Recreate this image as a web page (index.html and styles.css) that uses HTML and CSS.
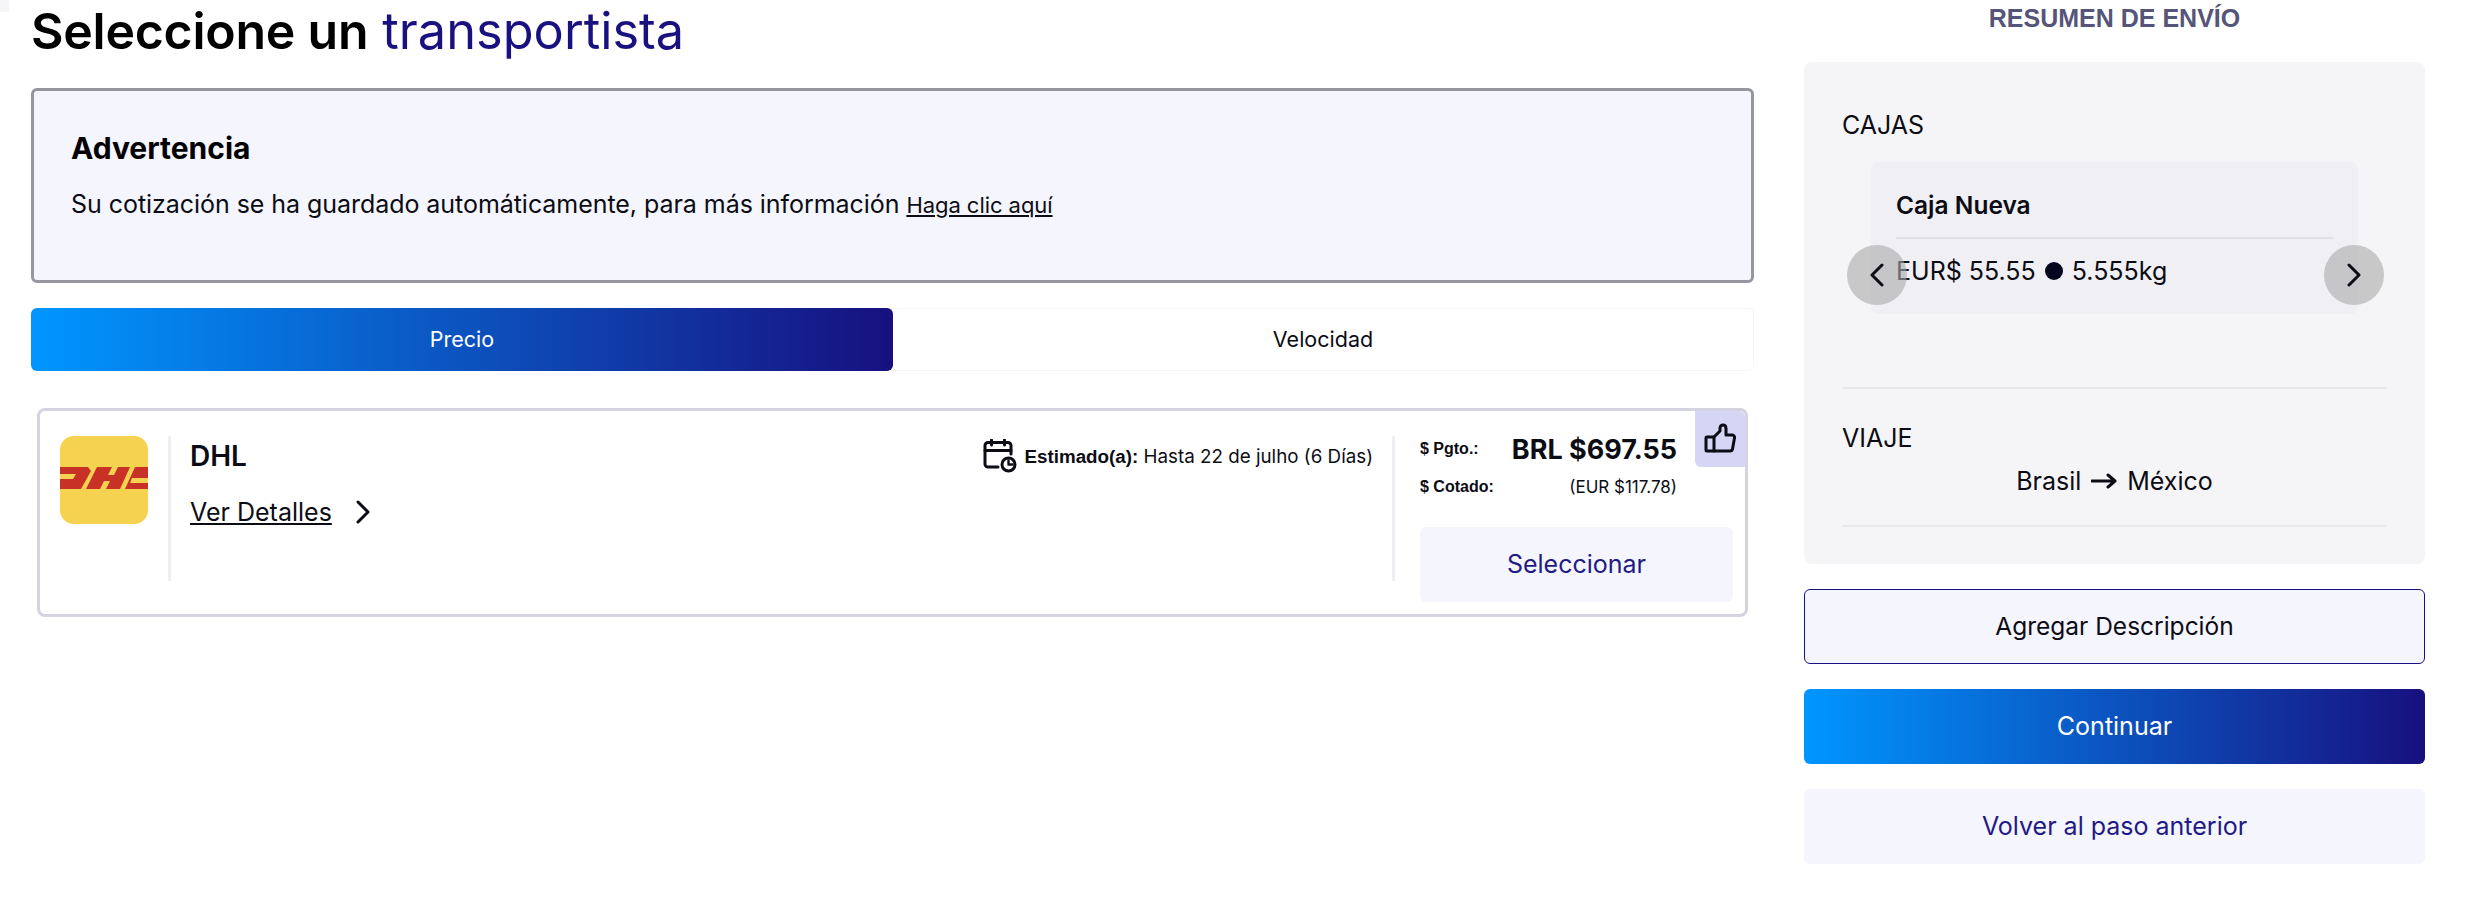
FILE: index.html
```html
<!DOCTYPE html>
<html lang="es">
<head>
    <meta charset="UTF-8">
    <meta name="viewport" content="width=device-width, initial-scale=1.0">
    <title>Seleccione un transportista</title>
    <link rel="stylesheet" href="styles.css">
</head>
<body>
    <div class="corner"></div>
    <div class="page">
        <main class="main">
            <h1 class="title"><b>Seleccione un</b> <span>transportista</span></h1>

            <section class="warning">
                <h2>Advertencia</h2>
                <p>Su cotización se ha guardado automáticamente, para más información <a href="#">Haga clic aquí</a></p>
            </section>

            <div class="tabs">
                <button class="tab active">Precio</button>
                <button class="tab">Velocidad</button>
            </div>

            <article class="card">
                <svg class="logo" viewBox="0 0 88 88" aria-label="DHL">
                    <rect width="88" height="88" fill="#f5d24f"/>
                    <rect y="31" width="88" height="22" fill="#c83226"/>
                    <!-- slits cut out of the red band -->
                    <path fill="#f5d24f" d="M0 38h16l-3 5H0zM28 31h9L26 53h-5l10-18zM52 31h6l-4 8h-6zM44 45h6l-4 8h-6zM70 31h5L65 53h-5zM72 42h16v5H70z"/>
                </svg>

                <div class="carrier">
                    <div class="carrier-head">
                        <h3>DHL</h3>
                        <div class="estimate">
                            <svg class="calendar" viewBox="0 0 34 34" fill="none" stroke="#0c0c14" stroke-width="3" stroke-linecap="round" stroke-linejoin="round">
                                <path d="M15 28H5a3 3 0 0 1-3-3V6.500a3 3 0 0 1 3-3h20a3 3 0 0 1 3 3V15"/>
                                <path d="M2 11.500h26M8.500 1v5M21.500 1v5"/>
                                <circle cx="25.500" cy="25.500" r="6.500"/>
                                <path d="M25.500 21.500v4h4" stroke-width="2.400"/>
                            </svg>
                            <span><b>Estimado(a):</b> Hasta 22 de julho (6 Días)</span>
                        </div>
                    </div>
                    <a class="details" href="#"><span>Ver Detalles</span>
                        <svg viewBox="0 0 14 24" fill="none" stroke="#0c0c14" stroke-width="3" stroke-linecap="round" stroke-linejoin="round"><path d="M2 2l10 10L2 22"/></svg>
                    </a>
                </div>

                <div class="quote">
                    <div class="price-row">
                        <span class="label">$ Pgto.:</span>
                        <strong>BRL $697.55</strong>
                    </div>
                    <div class="price-row quoted">
                        <span class="label">$ Cotado:</span>
                        <span>(EUR $117.78)</span>
                    </div>
                    <button class="btn btn-soft select">Seleccionar</button>
                </div>

                <div class="thumb">
                    <svg viewBox="0 0 32 32" fill="none" stroke="#0c0c14" stroke-width="3" stroke-linejoin="round" stroke-linecap="round">
                        <path d="M10 14l6-6V5a3 3 0 0 1 3-3c2 0 3 1.500 3 3.500V12h6a2.500 2.500 0 0 1 2.500 3l-2 11a2.500 2.500 0 0 1-2.500 2H10z"/>
                        <path d="M10 14H3a1 1 0 0 0-1 1v12a1 1 0 0 0 1 1h7"/>
                    </svg>
                </div>
            </article>
        </main>

        <aside class="sidebar">
            <h2 class="sidebar-title">RESUMEN DE ENVÍO</h2>
            <div class="summary">
                <h4>CAJAS</h4>
                <div class="box">
                    <div class="box-name">Caja Nueva</div>
                    <div class="box-info"><span>EUR$ 55.55</span><i class="dot"></i><span>5.555kg</span></div>
                    <button class="nav prev" aria-label="Anterior">
                        <svg viewBox="0 0 14 24" fill="none" stroke="#0c0c14" stroke-width="3" stroke-linecap="round" stroke-linejoin="round"><path d="M12 2L2 12l10 10"/></svg>
                    </button>
                    <button class="nav next" aria-label="Siguiente">
                        <svg viewBox="0 0 14 24" fill="none" stroke="#0c0c14" stroke-width="3" stroke-linecap="round" stroke-linejoin="round"><path d="M2 2l10 10L2 22"/></svg>
                    </button>
                </div>
                <hr class="rule">
                <h4>VIAJE</h4>
                <div class="route">Brasil
                    <svg viewBox="0 0 26 16" fill="none" stroke="#0c0c14" stroke-width="3" stroke-linecap="round" stroke-linejoin="round"><path d="M1 8h23M17 2l7 6-7 6"/></svg>
                    México</div>
                <hr class="rule">
            </div>
            <button class="btn btn-outline">Agregar Descripción</button>
            <button class="btn btn-primary">Continuar</button>
            <button class="btn btn-soft">Volver al paso anterior</button>
        </aside>
    </div>
</body>
</html>
```

FILE: styles.css
```css
* {
    box-sizing: border-box;
}
body {
    margin: 0;
    background: #fff;
    color: #0c0c14;
    font-family: Inter, Arial, sans-serif;
}
button {
    font-family: inherit;
    cursor: pointer;
}
a {
    color: inherit;
}
.corner {
    position: absolute;
    top: 0;
    left: 0;
    width: 9px;
    height: 12px;
    background: #f6f6f8;
}
.page {
    display: flex;
    align-items: flex-start;
    padding-left: 31px;
}

/* left column */
.main {
    width: 1723px;
}
.title {
    margin: 0 0 26px;
    height: 62px;
    font-size: 50px;
    line-height: 62px;
    font-weight: 400;
    color: #000;
}
.title b {
    font-weight: 600;
    letter-spacing: -0.25px;
}
.title span {
    font-size: 50.500px;
    color: #1a1180;
}
.warning {
    height: 195px;
    padding: 39px 37px 0;
    background: #f5f5fd;
    border: 3px solid #96969e;
    border-radius: 6px;
}
.warning h2 {
    margin: 0 0 20px;
    font-size: 30px;
    line-height: 36px;
    font-weight: 700;
    color: #000;
}
.warning p {
    margin: 0;
    font-size: 25px;
    line-height: 36px;
    letter-spacing: -0.05px;
}
.warning a {
    font-size: 22px;
}
.tabs {
    display: flex;
    margin-top: 25px;
    height: 63px;
}
.tab {
    flex: 1;
    padding: 0 0 2px;
    border: 1px solid #f6f6f8;
    border-radius: 0 6px 6px 0;
    border-left: none;
    background: #fff;
    font-size: 21.500px;
    color: #0c0c14;
}
.tab.active {
    flex: 0 0 862px;
    border: none;
    border-radius: 6px;
    background: linear-gradient(90deg, #0096ff, #17107f);
    color: #fff;
}

.card {
    position: relative;
    display: flex;
    align-items: flex-start;
    height: 209px;
    margin: 37px 6px 0;
    padding: 25px 12px 12px 20px;
    border: 3px solid #d4d4e0;
    border-radius: 8px;
}
.logo {
    flex: none;
    width: 88px;
    height: 88px;
    border-radius: 14px;
}
.carrier {
    flex: 1;
    height: 145px;
    margin-left: 20px;
    padding: 0 19px 0 19px;
    border-left: 3px solid #eeeef3;
    border-right: 3px solid #eeeef3;
}
.carrier-head {
    display: flex;
    justify-content: space-between;
    align-items: flex-start;
}
.carrier-head h3 {
    margin: 0;
    font-size: 28px;
    line-height: 40px;
    font-weight: 600;
}
.estimate {
    display: flex;
    align-items: center;
    gap: 8px;
    height: 40px;
    font-size: 18.800px;
}
.estimate b {
    font-family: "Liberation Sans", Arial, sans-serif;
    font-weight: 700;
}
.calendar {
    width: 34px;
    height: 34px;
}
.details {
    display: inline-flex;
    align-items: center;
    gap: 24px;
    margin-top: 21px;
    font-size: 25px;
    text-decoration: none;
}
.details span {
    text-decoration: underline;
}
.details svg {
    width: 14px;
    height: 24px;
}
.quote {
    flex: none;
    width: 313px;
    margin: -6px 0 0 25px;
}
.price-row {
    display: flex;
    justify-content: space-between;
    align-items: center;
    height: 38px;
    padding-right: 56px;
}
.price-row strong {
    font-size: 27px;
    font-weight: 700;
}
.price-row.quoted {
    font-size: 17px;
}
.label {
    font-family: "Liberation Sans", Arial, sans-serif;
    font-size: 16px;
    font-weight: 700;
}
.thumb {
    position: absolute;
    top: 0;
    right: 0;
    display: flex;
    align-items: center;
    justify-content: center;
    width: 50px;
    height: 56px;
    background: #d5d5f6;
    border-radius: 0 6px 0 6px;
}
.thumb svg {
    width: 32px;
    height: 32px;
}

/* right column */
.sidebar {
    width: 621px;
    margin-left: 50px;
}
.sidebar-title {
    margin: 0 0 26px;
    font-family: "Liberation Sans", Arial, sans-serif;
    font-size: 25px;
    line-height: 36px;
    font-weight: 700;
    text-align: center;
    color: #55557a;
}
.summary {
    height: 502px;
    padding: 48px 38px 0;
    background: #f5f5f8;
    border-radius: 8px;
}
.summary h4 {
    margin: 0;
    font-size: 25px;
    line-height: 30px;
    font-weight: 400;
}
.box {
    position: relative;
    width: 487px;
    height: 152px;
    margin: 22px 0 73px 29px;
    padding: 24px 25px 0;
    background: #efeff4;
    border-radius: 8px;
}
.box-name {
    height: 53px;
    font-size: 24.500px;
    line-height: 38px;
    font-weight: 600;
    border-bottom: 2px solid #e0e0e8;
}
.box-info {
    display: flex;
    align-items: center;
    gap: 9px;
    margin-top: 14px;
    font-size: 25px;
    line-height: 36px;
}
.dot {
    width: 18px;
    height: 18px;
    border-radius: 50%;
    background: #05051f;
}
.nav {
    position: absolute;
    top: 83px;
    display: flex;
    align-items: center;
    justify-content: center;
    width: 60px;
    height: 60px;
    padding: 0;
    border: none;
    border-radius: 50%;
    background: rgba(170, 170, 170, 0.6);
}
.nav svg {
    width: 14px;
    height: 24px;
}
.nav.prev {
    left: -24px;
}
.nav.next {
    right: -26px;
}
.rule {
    margin: 0 0 34px;
    border: none;
    border-top: 2px solid #e8e8ec;
}
.route {
    display: flex;
    align-items: center;
    justify-content: center;
    gap: 10px;
    height: 30px;
    margin: 13px 0 29px;
    font-size: 25px;
}
.route svg {
    width: 26px;
    height: 16px;
}
.btn {
    display: block;
    width: 100%;
    height: 75px;
    margin-top: 25px;
    padding: 0 0 2px;
    border: none;
    border-radius: 6px;
    font-size: 25px;
}
.btn.select {
    margin-top: 21px;
}
.btn-outline {
    background: #f5f5fd;
    border: 1px solid #1a1180;
    color: #0c0c14;
    font-size: 24.500px;
}
.btn-primary {
    background: linear-gradient(90deg, #0096ff, #17107f);
    color: #fff;
}
.btn-soft {
    background: #f5f5fd;
    color: #221a85;
}
```
